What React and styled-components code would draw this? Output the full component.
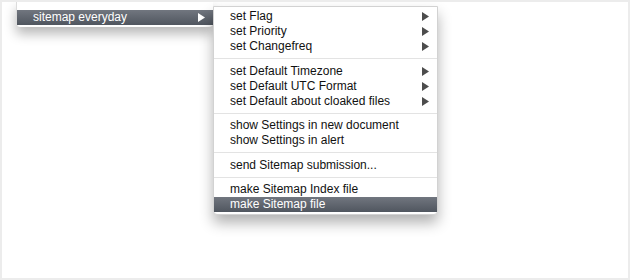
import React from 'react';
import styled, { createGlobalStyle } from 'styled-components';

// DATA

const groups = [
  [
    { label: 'set Flag', sub: true },
    { label: 'set Priority', sub: true },
    { label: 'set Changefreq', sub: true },
  ],
  [
    { label: 'set Default Timezone', sub: true },
    { label: 'set Default UTC Format', sub: true },
    { label: 'set Default about cloaked files', sub: true },
  ],
  [
    { label: 'show Settings in new document' },
    { label: 'show Settings in alert' },
  ],
  [{ label: 'send Sitemap submission...' }],
  [
    { label: 'make Sitemap Index file' },
    { label: 'make Sitemap file', active: true },
  ],
];

// COMPONENTS

const Arrow = ({ $light }) => (
  <ArrowIcon width="7" height="9" viewBox="0 0 7 9">
    <polygon points="0,0 7,4.5 0,9" fill={$light ? '#ffffff' : '#4d4d4d'} />
  </ArrowIcon>
);

const App = () => {
  return (
    <>
      <GlobalStyle />
      <Frame>
        <Stage>
          <ParentMenu>
            <Item $active $pad={16}>
              <span>sitemap everyday</span>
              <Arrow $light />
            </Item>
          </ParentMenu>
          <SubMenu>
            {groups.map((group, gi) => (
              <React.Fragment key={gi}>
                {gi > 0 && <Separator />}
                {group.map((item) => (
                  <Item key={item.label} $active={item.active} $pad={16}>
                    <span>{item.label}</span>
                    {item.sub && <Arrow />}
                  </Item>
                ))}
              </React.Fragment>
            ))}
          </SubMenu>
        </Stage>
      </Frame>
    </>
  );
};

// STYLES

const GlobalStyle = createGlobalStyle`
  body {
    margin: 0;
    background: #ffffff;
    font-family: "Liberation Sans", Arial, sans-serif;
  }
`;

const Frame = styled.div`
  box-sizing: border-box;
  width: 630px;
  height: 280px;
  border: 2px solid #ececec;
  background: #ffffff;
  overflow: hidden;
`;

const Stage = styled.div`
  display: flex;
  align-items: flex-start;
  padding-left: 14px;
`;

const ParentMenu = styled.div`
  box-sizing: border-box;
  width: 197px;
  padding: 8px 0 2px;
  background: #ffffff;
  border-left: 1px solid #dcdcdc;
  border-radius: 0 0 4px 4px;
  box-shadow: 0 7px 12px rgba(0, 0, 0, 0.28);
`;

const SubMenu = styled.div`
  box-sizing: border-box;
  width: 225px;
  margin-top: 4px;
  padding: 2px 0;
  background: #ffffff;
  border: 1px solid #d2d2d2;
  border-radius: 0 0 4px 4px;
  box-shadow: 0 8px 14px rgba(0, 0, 0, 0.3);
`;

const Item = styled.div`
  display: flex;
  align-items: center;
  justify-content: space-between;
  height: 15px;
  padding: 0 8px 0 ${(props) => props.$pad}px;
  font-size: 12px;
  line-height: 15px;
  color: ${(props) => (props.$active ? '#ffffff' : '#111111')};
  background: ${(props) =>
    props.$active ? 'linear-gradient(#71767f, #50565f)' : 'transparent'};
  white-space: nowrap;
`;

const ArrowIcon = styled.svg`
  display: block;
  flex: none;
`;

const Separator = styled.div`
  height: 9.5px;
  display: flex;
  align-items: center;

  &::after {
    content: '';
    flex: 1;
    height: 1px;
    background: #e3e3e3;
  }
`;

// EXPORT

export default App;
